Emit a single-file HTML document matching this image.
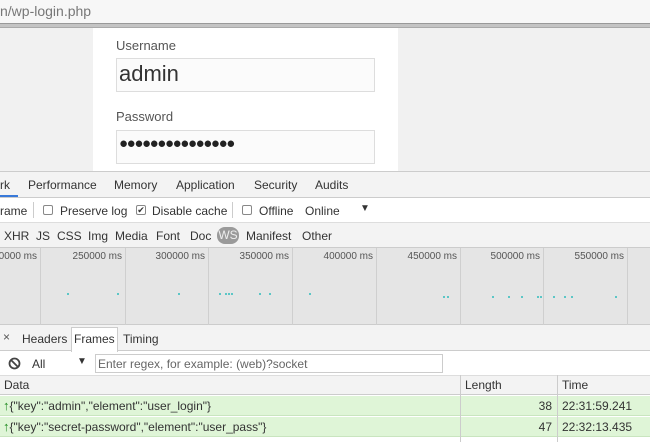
<!DOCTYPE html>
<html><head><style>
*{margin:0;padding:0;box-sizing:border-box}
body{width:650px;height:442px;overflow:hidden;background:#fff;font-family:"Liberation Sans",sans-serif;font-size:12px;color:#333;position:relative}
.a{position:absolute;white-space:nowrap}
.cb{position:absolute;width:10px;height:10px;border:1px solid #888;border-radius:2px;background:#fff;font-size:9px;line-height:8px;text-align:center;color:#333}
.gl{position:absolute;top:248px;width:1px;height:77px;background:#cfcfcf}
.lb{position:absolute;top:251px;font-size:10px;color:#555;text-align:right;width:80px}
.dot{position:absolute;width:2px;height:2px;background:#5cc6c6}
.ar{color:#1e8a1e;font-weight:bold;font-size:13px}
</style></head><body>
<div class="a" style="left:0;top:0;width:650px;height:23px;background:#f7f7f7"></div>
<div class="a" style="left:0;top:3px;font-size:14px;color:#777">n/wp-login.php</div>
<div class="a" style="left:0;top:23px;width:650px;height:5px;background:#c4c4c4;border-top:1px solid #999;border-bottom:1px solid #aaa"></div>
<div class="a" style="left:0;top:28px;width:650px;height:144px;background:#f1f1f1"></div>
<div class="a" style="left:93px;top:28px;width:305px;height:144px;background:#fff"></div>
<div class="a" style="left:116px;top:38px;font-size:13px;color:#555">Username</div>
<div class="a" style="left:116px;top:58px;width:259px;height:34px;background:#fbfbfb;border:1px solid #ddd"></div>
<div class="a" style="left:119px;top:61px;font-size:22px;color:#333">admin</div>
<div class="a" style="left:116px;top:109px;font-size:13px;color:#555">Password</div>
<div class="a" style="left:116px;top:130px;width:259px;height:34px;background:#fbfbfb;border:1px solid #ddd"></div>
<div class="a" style="left:119px;top:135px;font-size:15px;letter-spacing:-1.4px;color:#222">●●●●●●●●●●●●●●●</div>
<div class="a" style="left:0;top:171px;width:650px;height:27px;background:#f3f3f3;border-top:1px solid #ccc;border-bottom:1px solid #ccc"></div>
<div class="a" style="left:0;top:178px">rk</div>
<div class="a" style="left:0;top:195px;width:18px;height:2px;background:#3879d9"></div>
<div class="a" style="left:28px;top:178px">Performance</div>
<div class="a" style="left:114px;top:178px">Memory</div>
<div class="a" style="left:176px;top:178px">Application</div>
<div class="a" style="left:254px;top:178px">Security</div>
<div class="a" style="left:315px;top:178px">Audits</div>
<div class="a" style="left:0;top:204px">rame</div>
<div class="a" style="left:33px;top:202px;width:1px;height:16px;background:#ccc"></div>
<div class="cb" style="left:43px;top:205px"></div>
<div class="a" style="left:60px;top:204px">Preserve log</div>
<div class="cb" style="left:136px;top:205px">✔</div>
<div class="a" style="left:152px;top:204px">Disable cache</div>
<div class="a" style="left:232px;top:202px;width:1px;height:16px;background:#ccc"></div>
<div class="cb" style="left:242px;top:205px"></div>
<div class="a" style="left:259px;top:204px">Offline</div>
<div class="a" style="left:305px;top:204px">Online</div>
<div class="a" style="left:360px;top:203px;font-size:10px">▼</div>
<div class="a" style="left:0;top:222px;width:650px;height:1px;background:#ddd"></div>
<div class="a" style="left:0;top:223px;width:650px;height:25px;background:#f3f3f3"></div>
<div class="a" style="left:4px;top:229px">XHR</div>
<div class="a" style="left:36px;top:229px">JS</div>
<div class="a" style="left:57px;top:229px">CSS</div>
<div class="a" style="left:88px;top:229px">Img</div>
<div class="a" style="left:115px;top:229px">Media</div>
<div class="a" style="left:156px;top:229px">Font</div>
<div class="a" style="left:190px;top:229px">Doc</div>
<div class="a" style="left:217px;top:227px;width:22px;height:17px;background:#9a9a9a;border-radius:8px;color:#eee;text-align:center;line-height:17px">WS</div>
<div class="a" style="left:246px;top:229px">Manifest</div>
<div class="a" style="left:302px;top:229px">Other</div>
<div class="a" style="left:0;top:247px;width:650px;height:78px;background:#e5e5e5;border-top:1px solid #ccc;border-bottom:1px solid #ccc"></div>
<div class="gl" style="left:40px"></div><div class="gl" style="left:125px"></div><div class="gl" style="left:208px"></div><div class="gl" style="left:292px"></div><div class="gl" style="left:376px"></div><div class="gl" style="left:460px"></div><div class="gl" style="left:543px"></div><div class="gl" style="left:627px"></div>
<div class="lb" style="left:-43px">200000 ms</div>
<div class="lb" style="left:42px">250000 ms</div>
<div class="lb" style="left:125px">300000 ms</div>
<div class="lb" style="left:209px">350000 ms</div>
<div class="lb" style="left:293px">400000 ms</div>
<div class="lb" style="left:377px">450000 ms</div>
<div class="lb" style="left:460px">500000 ms</div>
<div class="lb" style="left:544px">550000 ms</div>
<div class="dot" style="left:67px;top:293px"></div><div class="dot" style="left:117px;top:293px"></div><div class="dot" style="left:178px;top:293px"></div>
<div class="dot" style="left:219px;top:293px"></div><div class="dot" style="left:225px;top:293px"></div><div class="dot" style="left:228px;top:293px"></div><div class="dot" style="left:231px;top:293px"></div>
<div class="dot" style="left:259px;top:293px"></div><div class="dot" style="left:269px;top:293px"></div><div class="dot" style="left:309px;top:293px"></div>
<div class="dot" style="left:443px;top:296px"></div><div class="dot" style="left:447px;top:296px"></div>
<div class="dot" style="left:492px;top:296px"></div><div class="dot" style="left:508px;top:296px"></div><div class="dot" style="left:521px;top:296px"></div><div class="dot" style="left:537px;top:296px"></div><div class="dot" style="left:540px;top:296px"></div><div class="dot" style="left:553px;top:296px"></div><div class="dot" style="left:564px;top:296px"></div><div class="dot" style="left:571px;top:296px"></div><div class="dot" style="left:615px;top:296px"></div>
<div class="a" style="left:0;top:325px;width:650px;height:26px;background:#f3f3f3;border-bottom:1px solid #ccc"></div>
<div class="a" style="left:3px;top:330px;font-size:12px;color:#555">×</div>
<div class="a" style="left:22px;top:332px">Headers</div>
<div class="a" style="left:71px;top:327px;width:47px;height:25px;background:#fff;border:1px solid #ccc;border-bottom:none"></div>
<div class="a" style="left:74px;top:332px">Frames</div>
<div class="a" style="left:123px;top:332px">Timing</div>
<svg class="a" style="left:8px;top:357px" width="13" height="13" viewBox="0 0 13 13"><circle cx="6.5" cy="6.5" r="5" fill="none" stroke="#444" stroke-width="1.8"/><line x1="3" y1="3" x2="10" y2="10" stroke="#444" stroke-width="1.8"/></svg>
<div class="a" style="left:32px;top:357px">All</div>
<div class="a" style="left:77px;top:356px;font-size:10px">▼</div>
<div class="a" style="left:95px;top:354px;width:348px;height:19px;border:1px solid #ccc;background:#fff"></div>
<div class="a" style="left:98px;top:357px;color:#666">Enter regex, for example: (web)?socket</div>
<div class="a" style="left:0;top:375px;width:650px;height:20px;background:#f3f3f3;border-top:1px solid #ddd;border-bottom:1px solid #ccc"></div>
<div class="a" style="left:4px;top:378px">Data</div>
<div class="a" style="left:465px;top:378px">Length</div>
<div class="a" style="left:562px;top:378px">Time</div>
<div class="a" style="left:0;top:396px;width:650px;height:20px;background:#dff5d7;border-bottom:1px solid #c9e5bf"></div>
<div class="a" style="left:0;top:417px;width:650px;height:20px;background:#dff5d7;border-bottom:1px solid #c9e5bf"></div>
<div class="a" style="left:460px;top:375px;width:1px;height:67px;background:#ccc"></div>
<div class="a" style="left:557px;top:375px;width:1px;height:67px;background:#ccc"></div>
<div class="a" style="left:3px;top:398px"><span class="ar">↑</span>{"key":"admin","element":"user_login"}</div>
<div class="a" style="left:3px;top:419px"><span class="ar">↑</span>{"key":"secret-password","element":"user_pass"}</div>
<div class="a" style="left:500px;top:399px;width:52px;text-align:right">38</div>
<div class="a" style="left:500px;top:420px;width:52px;text-align:right">47</div>
<div class="a" style="left:562px;top:399px">22:31:59.241</div>
<div class="a" style="left:562px;top:420px">22:32:13.435</div>
</body></html>
